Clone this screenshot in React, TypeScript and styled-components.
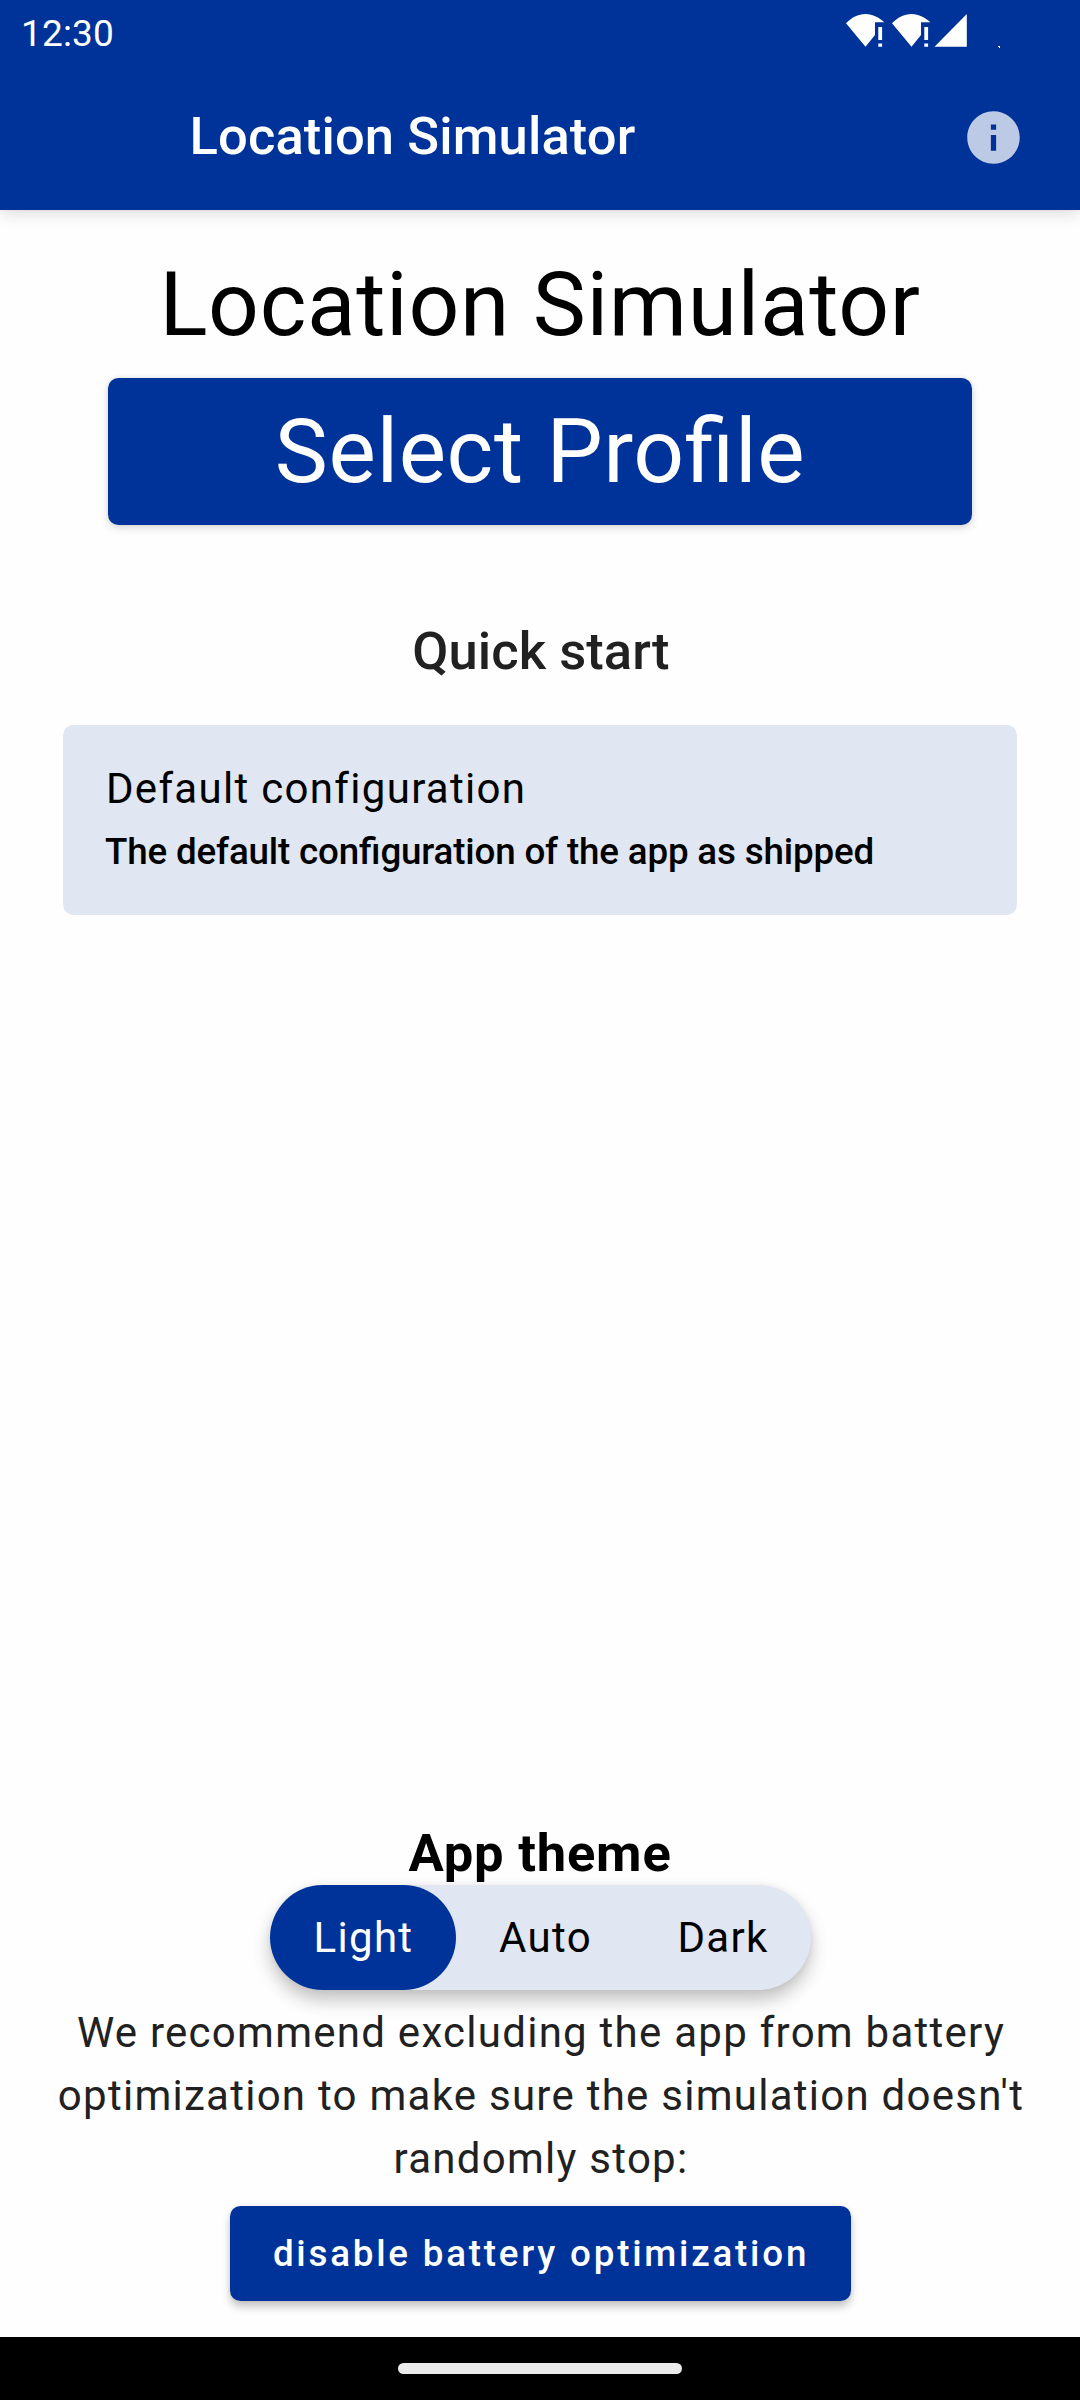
import React, { useState } from "react";
import styled, { createGlobalStyle } from "styled-components";

const BLUE = "#003399";
const TINT = "#e0e6f2";

const GlobalStyle = createGlobalStyle`
  html, body { margin: 0; padding: 0; background: #fefefe; }
  * { box-sizing: border-box; }
  body, button { font-family: Roboto, "Liberation Sans", sans-serif; }
  button { border: 0; margin: 0; cursor: pointer; }
  h1, h2, h3, p { margin: 0; font-weight: 400; }
`;

const Screen = styled.div`
  width: 1080px;
  height: 2400px;
  display: flex;
  flex-direction: column;
  background: #fefefe;
  color: #000;
  overflow: hidden;
`;

const Header = styled.header`
  flex: none;
  background: ${BLUE};
  color: #fff;
  box-shadow: 0 4px 14px rgba(0, 0, 0, 0.13), 0 0 3px rgba(0, 0, 0, 0.06);
`;

const StatusBar = styled.div`
  height: 63px;
  display: flex;
  justify-content: space-between;
  padding: 0 79px 0 21px;
`;

const Clock = styled.span`
  font-size: 37px;
  line-height: 43px;
  padding-top: 12px;
  letter-spacing: 0.15px;
`;

const StatusIcons = styled.svg`
  display: block;
  width: 160px;
  height: 63px;
`;

const AppBar = styled.div`
  height: 147px;
  display: flex;
  align-items: center;
  justify-content: space-between;
  padding: 0 55px 0 189.5px;
`;

const BarTitle = styled.h1`
  font-size: 52.5px;
  line-height: 63px;
  font-weight: 500;
  letter-spacing: 0.12px;
`;

const InfoButton = styled.button`
  width: 63px;
  height: 63px;
  margin-top: 1.5px;
  padding: 0;
  background: none;

  svg { display: block; width: 63px; height: 63px; }
`;

const Main = styled.main`
  flex: 1;
  display: flex;
  flex-direction: column;
  align-items: center;
  padding: 42px 0 36px;
`;

const PageTitle = styled.h2`
  font-size: 89.25px;
  line-height: 105px;
  letter-spacing: 0.66px;
`;

const ProfileButton = styled.button`
  width: 864px;
  height: 147px;
  margin-top: 21px;
  padding: 21px;
  border-radius: 10.5px;
  background: ${BLUE};
  color: #fff;
  font-size: 89.25px;
  line-height: 105px;
  letter-spacing: 0.6px;
  font-feature-settings: "liga" 1;
  box-shadow: 0 3px 8px rgba(0, 0, 0, 0.14), 0 0 4px rgba(0, 0, 0, 0.08);
`;

const SectionTitle = styled.h3<{ $strong?: boolean }>`
  padding-left: ${(p) => (p.$strong ? "0" : "2px")};
  font-size: 52.5px;
  line-height: 63px;
  letter-spacing: ${(p) => (p.$strong ? "0.8px" : "0.05px")};
  font-weight: ${(p) => (p.$strong ? 700 : 500)};
  color: ${(p) => (p.$strong ? "#000" : "#212121")};
`;

const QuickStart = styled.section`
  width: 954px;
  margin-top: 95px;
  display: flex;
  flex-direction: column;
  align-items: center;
  gap: 42px;
`;

const ConfigCard = styled.article`
  width: 100%;
  height: 190px;
  padding: 32px 42px;
  border-radius: 10.5px;
  background: ${TINT};
`;

const ConfigName = styled.p`
  padding-left: 1px;
  font-size: 42px;
  line-height: 63px;
  letter-spacing: 1.31px;
`;

const ConfigNote = styled.p`
  font-size: 36.75px;
  line-height: 63px;
  font-weight: 500;
  letter-spacing: -0.16px;
  font-feature-settings: "liga" 1;
`;

const Footer = styled.section`
  margin-top: auto;
  display: flex;
  flex-direction: column;
  align-items: center;
`;

const ThemeSwitch = styled.div`
  display: flex;
  height: 105px;
  border-radius: 53px;
  background: ${TINT};
  box-shadow: 0 10px 18px rgba(0, 0, 0, 0.24), 0 0 6px rgba(0, 0, 0, 0.06);
`;

const ThemeOption = styled.button<{ $selected: boolean; $width: number }>`
  width: ${(p) => p.$width}px;
  height: 105px;
  padding: 21px 0 21px 2px;
  border-radius: 53px;
  font-size: 42px;
  line-height: 63px;
  letter-spacing: 1.31px;
  background: ${(p) => (p.$selected ? BLUE : "transparent")};
  color: ${(p) => (p.$selected ? "#fff" : "#000")};
`;

const Advice = styled.p`
  width: 998px;
  margin-top: 11px;
  padding-left: 2px;
  font-size: 42px;
  line-height: 63px;
  letter-spacing: 1.26px;
  text-align: center;
  color: #212121;
`;

const BatteryButton = styled.button`
  width: 621px;
  height: 95px;
  margin-top: 16px;
  padding: 16px 0 16px 2px;
  border-radius: 10.5px;
  background: ${BLUE};
  color: #fff;
  font-size: 36.75px;
  font-weight: 500;
  line-height: 63px;
  letter-spacing: 2.78px;
  white-space: nowrap;
  box-shadow: 0 6px 9px rgba(0, 0, 0, 0.22), 0 0 4px rgba(0, 0, 0, 0.08);
`;

const NavBar = styled.nav`
  flex: none;
  height: 63px;
  padding-top: 26px;
  display: flex;
  justify-content: center;
  background: #000;
`;

const NavHandle = styled.div`
  width: 284px;
  height: 11px;
  margin-right: 1px;
  border-radius: 5.5px;
  background: #ebebeb;
`;

const WifiAlert = ({ x }: { x: number }) => (
  <g transform={`translate(${x} 0)`}>
    <path d="M5 23.3C10.5 17.6 17 14 24.5 14S38 17.6 43.3 22.3H34V35L24.5 46.7Z" />
    <path d="M37.3 27h3.8v13H37.3zM37.3 43.4h3.8v3.3H37.3z" />
  </g>
);

const THEMES = [
  { name: "Light", width: 186 },
  { name: "Auto", width: 178 },
  { name: "Dark", width: 177 },
];

export default function App() {
  const [theme, setTheme] = useState("Light");
  return (
    <Screen>
      <GlobalStyle />
      <Header>
        <StatusBar>
          <Clock>12:30</Clock>
          <StatusIcons viewBox="0 0 160 63" fill="#fff">
            <WifiAlert x={0} />
            <WifiAlert x={46} />
            <path d="M93.5 46.7L125.8 14V46.7Z" />
            <path d="M157 46h2v2h-1v-1h-1z" />
          </StatusIcons>
        </StatusBar>
        <AppBar>
          <BarTitle>Location Simulator</BarTitle>
          <InfoButton aria-label="Info">
            <svg viewBox="0 0 24 24" fill="#fff" fillOpacity="0.74">
              <path d="M12 2C6.48 2 2 6.48 2 12s4.48 10 10 10 10-4.48 10-10S17.52 2 12 2zm1 15h-2v-6h2v6zm0-8h-2V7h2v2z" />
            </svg>
          </InfoButton>
        </AppBar>
      </Header>
      <Main>
        <PageTitle>Location Simulator</PageTitle>
        <ProfileButton>Select Profile</ProfileButton>
        <QuickStart>
          <SectionTitle>Quick start</SectionTitle>
          <ConfigCard>
            <ConfigName>Default configuration</ConfigName>
            <ConfigNote>The default configuration of the app as shipped</ConfigNote>
          </ConfigCard>
        </QuickStart>
        <Footer>
          <SectionTitle $strong>App theme</SectionTitle>
          <ThemeSwitch>
            {THEMES.map(({ name, width }) => (
              <ThemeOption
                key={name}
                $width={width}
                $selected={name === theme}
                onClick={() => setTheme(name)}
              >
                {name}
              </ThemeOption>
            ))}
          </ThemeSwitch>
          <Advice>
            We recommend excluding the app from battery optimization to make sure the simulation doesn't randomly stop:
          </Advice>
          <BatteryButton>disable battery optimization</BatteryButton>
        </Footer>
      </Main>
      <NavBar>
        <NavHandle />
      </NavBar>
    </Screen>
  );
}
